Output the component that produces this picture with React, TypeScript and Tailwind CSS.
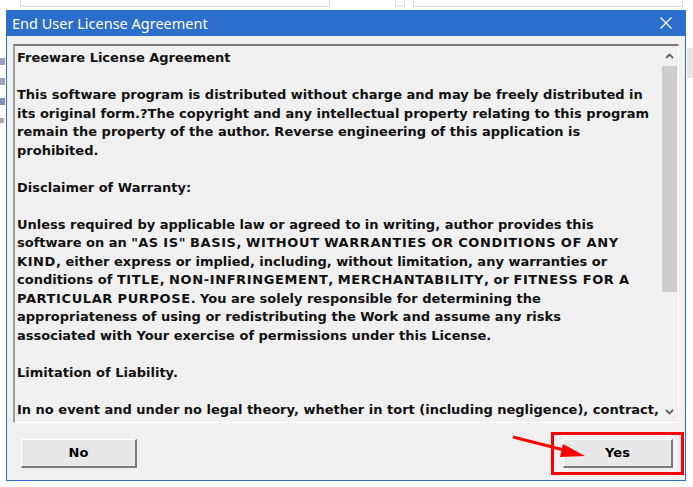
import React from "react";

const paragraphs: string[][] = [
  ["Freeware License Agreement"],
  [
    "This software program is distributed without charge and may be freely distributed in",
    "its original form.?The copyright and any intellectual property relating to this program",
    "remain the property of the author. Reverse engineering of this application is",
    "prohibited.",
  ],
  ["Disclaimer of Warranty:"],
  [
    "Unless required by applicable law or agreed to in writing, author provides this",
    "software on an \"AS IS\" BASIS, WITHOUT WARRANTIES OR CONDITIONS OF ANY",
    "KIND, either express or implied, including, without limitation, any warranties or",
    "conditions of TITLE, NON-INFRINGEMENT, MERCHANTABILITY, or FITNESS FOR A",
    "PARTICULAR PURPOSE. You are solely responsible for determining the",
    "appropriateness of using or redistributing the Work and assume any risks",
    "associated with Your exercise of permissions under this License.",
  ],
  ["Limitation of Liability."],
  [
    "In no event and under no legal theory, whether in tort (including negligence), contract,",
  ],
];

const bodyFont = '"DejaVu Sans", Verdana, sans-serif';

function Line({ text }: { text: string }) {
  const parts = text.split(/([A-Z][A-Z\-]+)/);
  return (
    <div>
      {parts.map((p, i) =>
        /^[A-Z][A-Z\-]+$/.test(p) ? (
          <span key={i} className="tracking-[0.6px]">
            {p}
          </span>
        ) : (
          <span key={i}>{p}</span>
        )
      )}
    </div>
  );
}

function Button({ label, w }: { label: string; w: string }) {
  return (
    <div className={`${w} h-[29px] bg-[#e8e8e8] border-t border-l border-t-white border-l-white border-r-2 border-b-2 border-r-[#7a7a7a] border-b-[#7a7a7a] flex items-center justify-center`}>
      <span className="text-[13px] font-bold text-black" style={{ fontFamily: bodyFont }}>
        {label}
      </span>
    </div>
  );
}

export default function App() {
  return (
    <div className="w-[693px] h-[487px] bg-white relative overflow-hidden" style={{ fontFamily: bodyFont }}>
      {/* background window fragments */}
      <div className="absolute left-[20px] top-0 w-[310px] h-[7px] border-b border-x border-[#d9d9d9] bg-white" />
      <div className="absolute left-[395px] top-0 w-[10px] h-[7px] border-b border-x border-[#d9d9d9]" />
      <div className="absolute left-[413px] top-0 w-[270px] h-[7px] border-b border-x border-[#d9d9d9]" />
      <div className="absolute left-0 top-[58px] w-[5px] h-[110px] flex flex-col gap-[13px]">
        <div className="w-[5px] h-[7px] bg-[#9aa4bc]" />
        <div className="w-[5px] h-[7px] bg-[#9aa4bc]" />
        <div className="w-[5px] h-[7px] bg-[#7d8fb4]" />
        <div className="w-[4px] h-[5px] bg-[#a0a6b6]" />
      </div>
      <div className="absolute left-[687px] top-[48px] w-[6px] h-[30px] bg-[#e6e6e6]" />

      {/* dialog */}
      <div className="absolute left-[6px] top-[10px] w-[680px] h-[471px] border border-[#2b6ecc] border-t-0 bg-[#f0f0f0] flex flex-col">
        <div className="h-[26px] bg-[#2b6ecc] flex items-center justify-between pl-[5px] pr-[12px]">
          <span className="text-white text-[14.5px] leading-none" style={{ fontFamily: '"Noto Sans", "Open Sans", sans-serif' }}>
            End User License Agreement
          </span>
          <svg width="14" height="14" viewBox="0 0 14 14">
            <path d="M1.5 1.5 L12.5 12.5 M12.5 1.5 L1.5 12.5" stroke="white" strokeWidth="1.3" fill="none" />
          </svg>
        </div>
        <div className="flex-1 flex flex-col px-[6px] pt-[8px]">
          <div className="h-[379px] flex border-t-2 border-l-2 border-t-[#7a7a7a] border-l-[#a0a0a0] border-r border-b border-r-white border-b-white">
            <div className="flex-1 overflow-hidden pl-[2px] pt-[3px] text-[13px] font-bold text-[#111] leading-[18.5px]">
              {paragraphs.map((p, i) => (
                <div key={i} className="mb-[18.5px] whitespace-nowrap">
                  {p.map((l, j) => (
                    <Line key={j} text={l} />
                  ))}
                </div>
              ))}
            </div>
            <div className="w-[17px] bg-[#f0f0f0] flex flex-col items-center">
              <div className="h-[20px] w-full flex items-center justify-center">
                <svg width="9" height="6" viewBox="0 0 9 6">
                  <path d="M1 5 L4.5 1.5 L8 5" stroke="#606060" strokeWidth="1.8" fill="none" />
                </svg>
              </div>
              <div className="w-[15px] h-[226px] bg-[#cdcdcd]" />
              <div className="flex-1" />
              <div className="h-[20px] w-full flex items-center justify-center">
                <svg width="9" height="6" viewBox="0 0 9 6">
                  <path d="M1 1 L4.5 4.5 L8 1" stroke="#606060" strokeWidth="1.8" fill="none" />
                </svg>
              </div>
            </div>
          </div>
          <div className="flex justify-between items-start mt-[16px] pl-[8px] pr-[6px]">
            <Button label="No" w="w-[116px]" />
            <Button label="Yes" w="w-[110px]" />
          </div>
        </div>
      </div>

      {/* annotation */}
      <div className="absolute left-[551px] top-[432px] w-[133px] h-[43px] border-[3px] border-[#ff0000]" />
      <svg className="absolute left-0 top-0" width="693" height="487" viewBox="0 0 693 487">
        <line x1="513" y1="437" x2="568" y2="451" stroke="#ff0000" strokeWidth="3" />
        <polygon points="585,456 563,444 560,457" fill="#ff0000" />
      </svg>
    </div>
  );
}
